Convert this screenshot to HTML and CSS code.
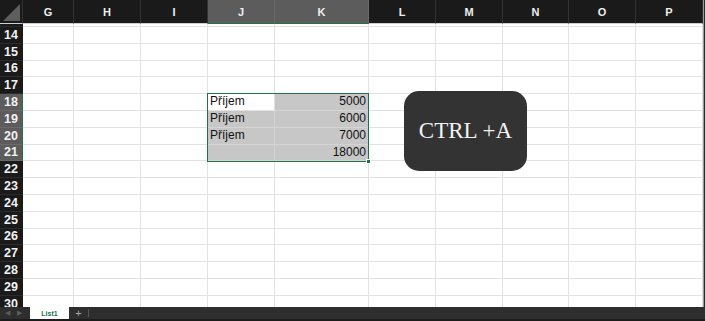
FILE: index.html
```html
<!DOCTYPE html>
<html lang="cs">
<head>
  <meta charset="UTF-8" />
  <meta name="viewport" content="width=device-width, initial-scale=1.0" />
  <title>List1</title>
  <link rel="stylesheet" href="styles.css">
</head>
<body>
  <div class="okno">
    <div class="list">
      <div class="radek hlavicka">
        <div class="roh"><span class="trojuhelnik"></span></div>
        <div>G</div><div>H</div><div>I</div>
        <div class="vybrano">J</div><div class="vybrano">K</div>
        <div>L</div><div>M</div><div>N</div><div>O</div><div>P</div><div class="okraj"></div>
      </div>
      <div class="radek zbytek">
        <div class="cislo"></div>
        <div></div><div></div><div></div><div></div><div></div><div></div><div></div><div></div><div></div><div></div><div class="okraj"></div>
      </div>
      <div class="radek">
        <div class="cislo">14</div>
        <div></div><div></div><div></div><div></div><div></div><div></div><div></div><div></div><div></div><div></div><div class="okraj"></div>
      </div>
      <div class="radek">
        <div class="cislo">15</div>
        <div></div><div></div><div></div><div></div><div></div><div></div><div></div><div></div><div></div><div></div><div class="okraj"></div>
      </div>
      <div class="radek">
        <div class="cislo">16</div>
        <div></div><div></div><div></div><div></div><div></div><div></div><div></div><div></div><div></div><div></div><div class="okraj"></div>
      </div>
      <div class="radek">
        <div class="cislo">17</div>
        <div></div><div></div><div></div><div></div><div></div><div></div><div></div><div></div><div></div><div></div><div class="okraj"></div>
      </div>
      <div class="radek">
        <div class="cislo vybrano">18</div>
        <div></div><div></div><div></div>
        <div class="bunka aktivni">Příjem<span class="vyber"><span class="uchyt"></span></span></div>
        <div class="bunka sede cislice">5000</div>
        <div></div><div></div><div></div><div></div><div></div><div class="okraj"></div>
      </div>
      <div class="radek">
        <div class="cislo vybrano">19</div>
        <div></div><div></div><div></div>
        <div class="bunka sede">Příjem</div>
        <div class="bunka sede cislice">6000</div>
        <div></div><div></div><div></div><div></div><div></div><div class="okraj"></div>
      </div>
      <div class="radek">
        <div class="cislo vybrano">20</div>
        <div></div><div></div><div></div>
        <div class="bunka sede">Příjem</div>
        <div class="bunka sede cislice">7000</div>
        <div></div><div></div><div></div><div></div><div></div><div class="okraj"></div>
      </div>
      <div class="radek">
        <div class="cislo vybrano">21</div>
        <div></div><div></div><div></div>
        <div class="bunka sede"></div>
        <div class="bunka sede cislice">18000</div>
        <div></div><div></div><div></div><div></div><div></div><div class="okraj"></div>
      </div>
      <div class="radek">
        <div class="cislo">22</div>
        <div></div><div></div><div></div><div></div><div></div><div></div><div></div><div></div><div></div><div></div><div class="okraj"></div>
      </div>
      <div class="radek">
        <div class="cislo">23</div>
        <div></div><div></div><div></div><div></div><div></div><div></div><div></div><div></div><div></div><div></div><div class="okraj"></div>
      </div>
      <div class="radek">
        <div class="cislo">24</div>
        <div></div><div></div><div></div><div></div><div></div><div></div><div></div><div></div><div></div><div></div><div class="okraj"></div>
      </div>
      <div class="radek">
        <div class="cislo">25</div>
        <div></div><div></div><div></div><div></div><div></div><div></div><div></div><div></div><div></div><div></div><div class="okraj"></div>
      </div>
      <div class="radek">
        <div class="cislo">26</div>
        <div></div><div></div><div></div><div></div><div></div><div></div><div></div><div></div><div></div><div></div><div class="okraj"></div>
      </div>
      <div class="radek">
        <div class="cislo">27</div>
        <div></div><div></div><div></div><div></div><div></div><div></div><div></div><div></div><div></div><div></div><div class="okraj"></div>
      </div>
      <div class="radek">
        <div class="cislo">28</div>
        <div></div><div></div><div></div><div></div><div></div><div></div><div></div><div></div><div></div><div></div><div class="okraj"></div>
      </div>
      <div class="radek">
        <div class="cislo">29</div>
        <div></div><div></div><div></div><div></div><div></div><div></div><div></div><div></div><div></div><div></div><div class="okraj"></div>
      </div>
      <div class="radek">
        <div class="cislo">30</div>
        <div></div><div></div><div></div><div></div><div></div><div></div><div></div><div></div><div></div><div></div><div class="okraj"></div>
      </div>

      <div class="zkratka">CTRL +A</div>
    </div>

    <div class="listy">
      <span class="sipka">&#9664;</span>
      <span class="sipka">&#9654;</span>
      <span class="zalozka">List1</span>
      <span class="plus">+</span>
      <span class="oddelovac"></span>
    </div>
  </div>
</body>
</html>
```

FILE: styles.css
```css
* {
  box-sizing: border-box;
}
body {
  margin: 0;
  background: #fff;
  font-family: "Liberation Sans", Arial, sans-serif;
}
.okno {
  width: 705px;
  height: 321px;
  display: flex;
  flex-direction: column;
  overflow: hidden;
}
.list {
  position: relative;
  height: 307px;
  overflow: hidden;
}
.radek {
  display: grid;
  grid-template-columns: 23px 51px 67px 67px 67px 94px 67px 67px 66px 67px 67px 1fr;
  height: 16.8px;
}
.radek > div {
  border-right: 1px solid #e2e2e2;
  border-bottom: 1px solid #e2e2e2;
}
.radek > .okraj {
  background: #2a2a2a;
  border-left: 1px solid #9a9a9a;
  border-right: none;
  border-bottom: none;
}
.hlavicka {
  height: 24px;
}
.hlavicka > div {
  background: #1a1a1a;
  color: #eee;
  font-size: 11px;
  font-weight: bold;
  display: flex;
  align-items: center;
  justify-content: center;
  border-right: 1px solid #333;
  border-bottom: 1px solid #cfcfcf;
}
.hlavicka > .vybrano {
  background: #5c5c5c;
  border-right-color: #6a6a6a;
  border-bottom: 1px solid #217346;
}
.roh {
  position: relative;
}
.trojuhelnik {
  position: absolute;
  right: 2px;
  bottom: 2px;
  width: 0;
  height: 0;
  border-left: 17px solid transparent;
  border-bottom: 17px solid #5e5e5e;
}
.zbytek {
  height: 3px;
}
.radek > .cislo {
  background: #1a1a1a;
  color: #f2f2f2;
  font-size: 12.5px;
  font-weight: bold;
  display: flex;
  align-items: flex-end;
  justify-content: center;
  line-height: 15px;
  border-right: 1px solid #1a1a1a;
  border-bottom: 1px solid #2c2c2c;
}
.radek > .cislo.vybrano {
  background: #5c5c5c;
  border-right: 1px solid #217346;
  border-bottom-color: #6a6a6a;
}
.bunka {
  position: relative;
  font-size: 12px;
  color: #111;
  line-height: 15px;
  padding: 0 2px;
  white-space: nowrap;
}
.sede {
  background: #c7c7c7;
}
.radek > .sede {
  border-right-color: #d4d4d4;
  border-bottom-color: #d4d4d4;
}
.cislice {
  text-align: right;
}
.aktivni {
  background: #fff;
}
.vyber {
  position: absolute;
  z-index: 2;
  left: -1px;
  top: -1px;
  width: 162px;
  height: 69px;
  border: 1px solid #217346;
}
.uchyt {
  position: absolute;
  right: -3px;
  bottom: -3px;
  width: 5px;
  height: 5px;
  background: #217346;
  border: 1px solid #fff;
}
.zkratka {
  position: absolute;
  z-index: 3;
  left: 404px;
  top: 91px;
  width: 123px;
  height: 80px;
  border-radius: 15px;
  background: rgba(38, 38, 38, 0.94);
  color: #f2f2f2;
  font-family: "Liberation Serif", "Times New Roman", serif;
  font-size: 23px;
  display: flex;
  align-items: center;
  justify-content: center;
}
.listy {
  height: 14px;
  background: #2e2e2e;
  border-bottom: 2px solid #1c1c1c;
  display: flex;
  align-items: stretch;
  font-size: 7px;
}
.sipka {
  color: #5c5c5c;
  width: 12px;
  padding-left: 5px;
  display: flex;
  align-items: center;
  font-size: 7px;
}
.zalozka {
  margin-left: 6px;
  width: 39px;
  background: #fff;
  color: #217346;
  font-weight: bold;
  display: flex;
  align-items: center;
  justify-content: center;
  font-size: 7px;
}
.plus {
  width: 19px;
  color: #a8a8a8;
  font-size: 11px;
  display: flex;
  align-items: center;
  justify-content: center;
}
.oddelovac {
  width: 1px;
  margin: 2px 0;
  background: #555;
}
```
